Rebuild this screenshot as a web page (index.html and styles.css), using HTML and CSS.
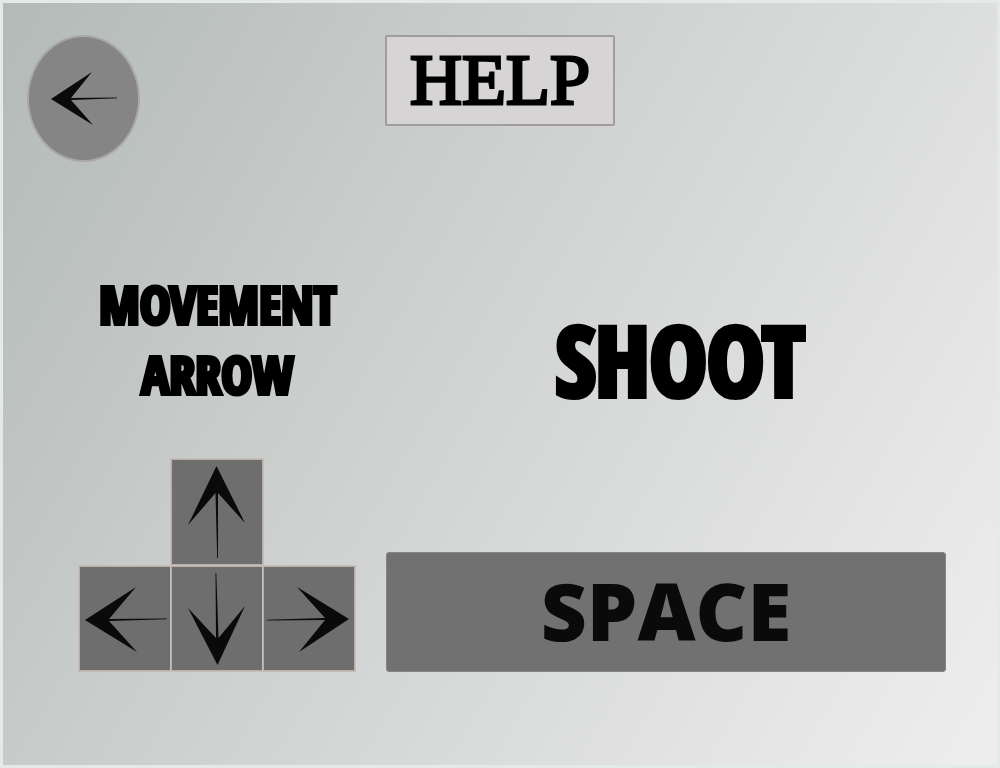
FILE: index.html
```html
<!DOCTYPE html>
<html lang="en">
<head>
<meta charset="utf-8">
<meta name="viewport" content="width=device-width, initial-scale=1">
<title>Help</title>
<link rel="stylesheet" href="styles.css">
</head>
<body>
<div class="screen">
  <header class="top">
    <button class="back" type="button" aria-label="Back">
      <svg width="68" height="56" viewBox="0 0 68 56"><path d="M1 28 42 1 21 27 67 26.500v.8L21 29 43 54Z"/></svg>
    </button>
    <h1 class="title">HELP</h1>
  </header>
  <main class="controls">
    <h2 class="label">MOVEMENT<br>ARROW</h2>
    <h2 class="label label-large">SHOOT</h2>
    <div class="keys">
      <button class="key key-up" type="button" aria-label="Up">
        <svg width="88" height="104" viewBox="0 0 88 104"><path d="M43.500 6 72 63 45 33 45 98h-.8L42.500 33 15 65Z"/></svg>
      </button>
      <button class="key key-left" type="button" aria-label="Left">
        <svg width="88" height="104" viewBox="0 0 88 104"><path d="M4 53 55 20 28 52 86 51.500v.8L28 54 56 85Z"/></svg>
      </button>
      <button class="key key-down" type="button" aria-label="Down">
        <svg width="88" height="104" viewBox="0 0 88 104"><path d="M44.500 98 15 41 43 71 42.500 6h.8L45.500 71 72 39Z"/></svg>
      </button>
      <button class="key key-right" type="button" aria-label="Right">
        <svg width="88" height="104" viewBox="0 0 88 104"><path d="M84 52 32 20 60 51 2 52.700v.8L60 53 34 85Z"/></svg>
      </button>
    </div>
    <button class="space" type="button">SPACE</button>
  </main>
</div>
</body>
</html>
```
FILE: styles.css
```css
* {
  box-sizing: border-box;
}

body {
  margin: 0;
}

.screen {
  min-height: 100vh;
  border: 3px solid #e3eae7;
  background: linear-gradient(120deg, #b3bab8 0%, #c8cccb 33%, #dbdddc 65%, #eeeeee 100%);
}

.top {
  display: grid;
  grid-template-columns: 1fr auto 1fr;
  align-items: start;
  padding: 32px 24px 0;
}

button {
  display: flex;
  align-items: center;
  justify-content: center;
  padding: 0;
  color: #0a0a0a;
}

svg {
  display: block;
  flex: none;
  fill: #0a0a0a;
}

.back {
  width: 113px;
  height: 127px;
  border: 2px solid #aaa8a8;
  border-radius: 50%;
  background: #858585;
}

.title {
  margin: 0;
  width: 230px;
  border: 2px solid #a39c9c;
  border-radius: 2px;
  background: #d6d4d4;
  color: #000;
  font: 400 72px/87px "Liberation Serif", serif;
  text-align: center;
  -webkit-text-stroke: 3px #000;
}

.controls {
  display: grid;
  grid-template-columns: minmax(0, 277fr) minmax(0, 560fr);
  gap: 50px 30px;
  align-items: end;
  padding: 107px 51px 32px 76px;
}

.label {
  margin: 0;
  color: #000;
  font: 800 52px/70px "Open Sans Condensed", "Open Sans", sans-serif;
  text-align: center;
  -webkit-text-stroke: 4px #000;
}

.label-large {
  padding-left: 28px;
  font-size: 96px;
  line-height: 100px;
  -webkit-text-stroke-width: 6px;
}

.keys {
  display: grid;
  grid-template: "void up none" 106px "left down right" 105px / 1fr 1fr 1fr;
  row-gap: 1px;
  padding: 0 1px 1px 0;
}

.key {
  border: 1px solid #b9b0aa;
  background: #6e6e6e;
  box-shadow: 0 0 0 1px #c6bdb7;
}

.key-up { grid-area: up; }
.key-left { grid-area: left; }
.key-down { grid-area: down; }
.key-right { grid-area: right; }

.space {
  height: 120px;
  padding-bottom: 4px;
  border: 1px solid #858585;
  border-radius: 3px;
  background: #717171;
  font: 800 80px/96px "Open Sans", sans-serif;
}
```
